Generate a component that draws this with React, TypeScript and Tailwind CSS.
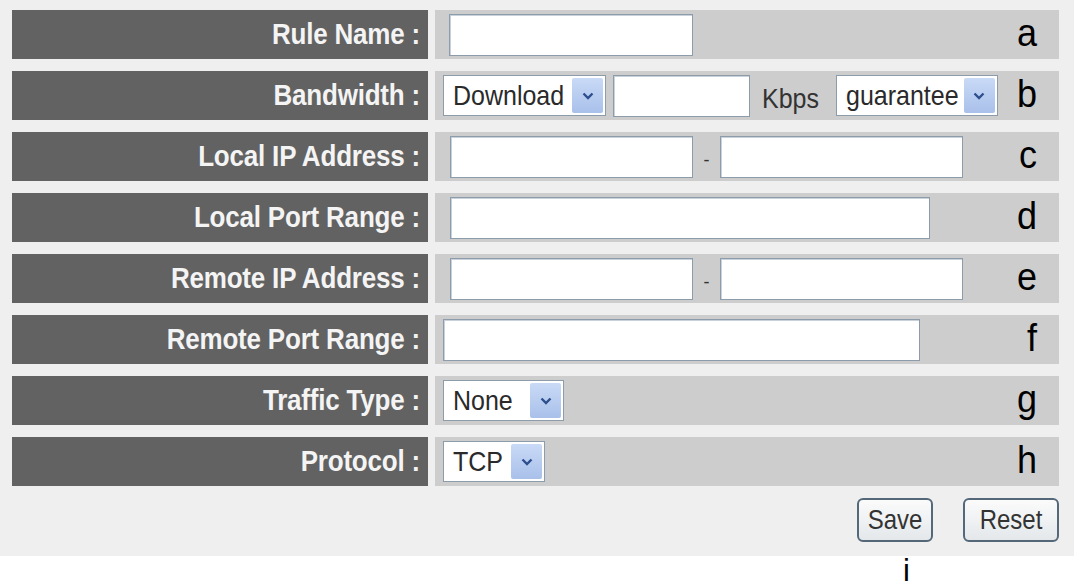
import React from "react";

const font = { fontFamily: '"Liberation Sans", Arial, sans-serif' };

const TextBox = ({ w }: { w: string }) => (
  <div className={`h-[42px] ${w} bg-white border border-[#8d9cab] shadow-[inset_1px_1px_0_#c9d2db]`} />
);

const Select = ({ w, value }: { w: string; value: string }) => (
  <div className={`relative h-[41px] ${w} bg-white border border-[#8d9cab] flex items-center`}>
    <span className="pl-[9px] inline-block scale-y-[1.12] text-[25px] leading-none text-[#2a2a2a]">{value}</span>
    <div className="absolute right-[2px] top-[2px] bottom-[2px] w-[31px] rounded-[2px] bg-gradient-to-b from-[#c9daf6] to-[#a9c0ea] flex items-center justify-center">
      <svg width="12" height="8" viewBox="0 0 12 8">
        <path d="M1.5 1.5 L6 6 L10.5 1.5" fill="none" stroke="#2d4f8e" strokeWidth="2.4" />
      </svg>
    </div>
  </div>
);

const Row = ({ label, letter, pl, children }: { label: string; letter: string; pl: string; children: React.ReactNode }) => (
  <div className="flex h-[49px] mb-[12px]">
    <div className="w-[416px] bg-[#626262] flex items-center justify-end pr-[8px]">
      <span className="inline-block scale-y-[1.1] text-[26px] font-bold text-[#f4f4f4] tracking-[-0.2px]">{label}</span>
    </div>
    <div className={`ml-[7px] w-[624px] bg-[#cdcdcd] flex items-center ${pl}`}>
      {children}
      <span className="ml-auto pr-[22px] inline-block scale-y-[1.08] text-[36px] leading-none text-black -mt-[4px]">{letter}</span>
    </div>
  </div>
);

const Dash = () => <span className="w-[27px] self-end mb-[12px] text-center text-[18px] leading-none text-[#333]">-</span>;

export default function App() {
  return (
    <div className="w-[1074px] h-[587px] bg-white overflow-hidden" style={font}>
      <div className="h-[556px] bg-[#efefef] pl-[12px] pt-[10px]">
        <Row label="Rule Name :" letter="a" pl="pl-[14px]">
          <TextBox w="w-[244px]" />
        </Row>
        <Row label="Bandwidth :" letter="b" pl="pl-[8px]">
          <Select w="w-[163px]" value="Download" />
          <div className="ml-[7px]">
            <TextBox w="w-[137px]" />
          </div>
          <span className="ml-[12px] inline-block scale-y-[1.12] text-[25px] text-[#333] leading-none mt-[6px]">Kbps</span>
          <div className="ml-[17px]">
            <Select w="w-[162px]" value="guarantee" />
          </div>
        </Row>
        <Row label="Local IP Address :" letter="c" pl="pl-[15px]">
          <TextBox w="w-[243px]" />
          <Dash />
          <TextBox w="w-[243px]" />
        </Row>
        <Row label="Local Port Range :" letter="d" pl="pl-[15px]">
          <TextBox w="w-[480px]" />
        </Row>
        <Row label="Remote IP Address :" letter="e" pl="pl-[15px]">
          <TextBox w="w-[243px]" />
          <Dash />
          <TextBox w="w-[243px]" />
        </Row>
        <Row label="Remote Port Range :" letter="f" pl="pl-[8px]">
          <TextBox w="w-[477px]" />
        </Row>
        <Row label="Traffic Type :" letter="g" pl="pl-[8px]">
          <Select w="w-[121px]" value="None" />
        </Row>
        <Row label="Protocol :" letter="h" pl="pl-[8px]">
          <Select w="w-[102px]" value="TCP" />
        </Row>
        <div className="flex justify-end w-[1047px] gap-[30px] mt-[1px]">
          <button className="w-[76px] h-[44px] rounded-[6px] border-2 border-[#55687a] bg-gradient-to-b from-[#fbfbfb] to-[#e4e8eb] text-[24px] text-[#333]">
            <span className="inline-block scale-y-[1.12]">Save</span>
          </button>
          <button className="w-[96px] h-[44px] rounded-[6px] border-2 border-[#55687a] bg-gradient-to-b from-[#fbfbfb] to-[#e4e8eb] text-[24px] text-[#333]">
            <span className="inline-block scale-y-[1.12]">Reset</span>
          </button>
        </div>
      </div>
      <div className="pl-[903px] pt-[1px] text-[31px] leading-[28px] text-black">i</div>
    </div>
  );
}
